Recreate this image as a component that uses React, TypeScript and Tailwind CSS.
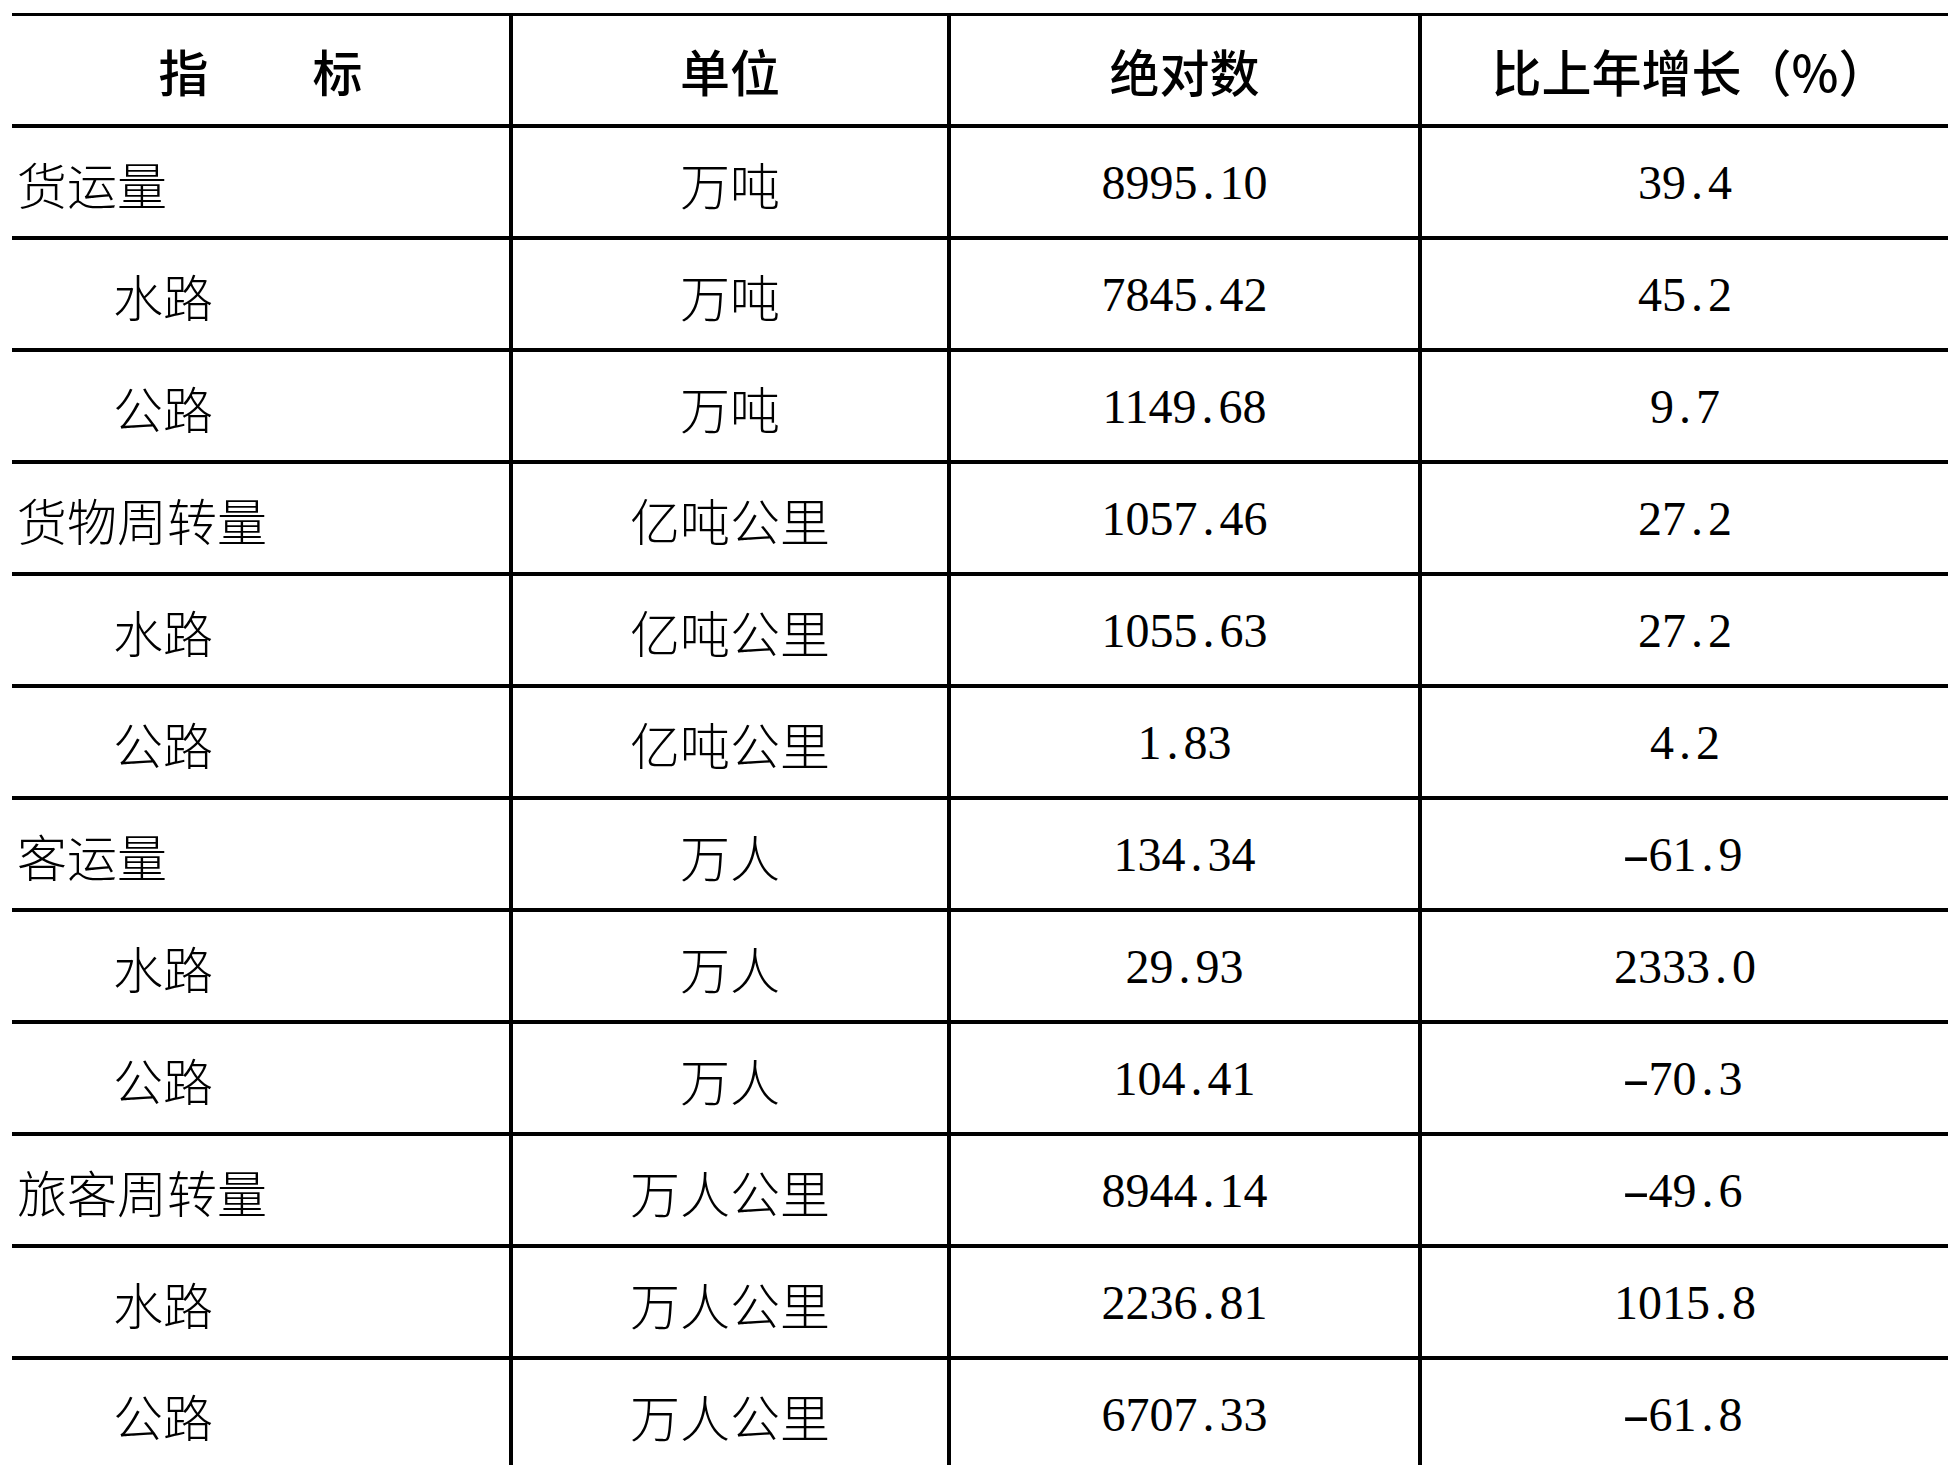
import React from "react";

type Row = { name: string; sub?: boolean; unit: string; value: string; growth: string };

const rows: Row[] = [
  { name: "货运量", unit: "万吨", value: "8995.10", growth: "39.4" },
  { name: "水路", sub: true, unit: "万吨", value: "7845.42", growth: "45.2" },
  { name: "公路", sub: true, unit: "万吨", value: "1149.68", growth: "9.7" },
  { name: "货物周转量", unit: "亿吨公里", value: "1057.46", growth: "27.2" },
  { name: "水路", sub: true, unit: "亿吨公里", value: "1055.63", growth: "27.2" },
  { name: "公路", sub: true, unit: "亿吨公里", value: "1.83", growth: "4.2" },
  { name: "客运量", unit: "万人", value: "134.34", growth: "-61.9" },
  { name: "水路", sub: true, unit: "万人", value: "29.93", growth: "2333.0" },
  { name: "公路", sub: true, unit: "万人", value: "104.41", growth: "-70.3" },
  { name: "旅客周转量", unit: "万人公里", value: "8944.14", growth: "-49.6" },
  { name: "水路", sub: true, unit: "万人公里", value: "2236.81", growth: "1015.8" },
  { name: "公路", sub: true, unit: "万人公里", value: "6707.33", growth: "-61.8" },
];

const cjk = "font-['Noto_Sans_CJK_SC',sans-serif]";
const num = "font-['Liberation_Serif',serif] text-[48px]";

// SimSun-like numbers: wide period and long minus
function Num({ v }: { v: string }) {
  const neg = v.startsWith("-");
  const body = neg ? v.slice(1) : v;
  const [a, b] = body.split(".");
  return (
    <span className={num}>
      {neg && <span className="inline-block scale-x-175 mr-[5px]">-</span>}
      {a}
      {b !== undefined && (
        <>
          <span className="inline-block w-[22px] text-center">.</span>
          {b}
        </>
      )}
    </span>
  );
}

export default function App() {
  return (
    <div className="h-[1465px] overflow-hidden bg-white pt-[13px] pl-[12px] text-black">
      <div className="w-[1936px] border-t-[3px] border-black">
        <div className={`flex h-[112px] border-b-4 border-black text-[50px] font-medium ${cjk}`}>
          <div className="w-[497px] flex items-center justify-center gap-[104px]">
            <span>指</span>
            <span>标</span>
          </div>
          <div className="w-[438px] border-l-4 border-black flex items-center justify-center">单位</div>
          <div className="w-[471px] border-l-4 border-black flex items-center justify-center">绝对数</div>
          <div className="w-[530px] border-l-4 border-black flex items-center justify-center pl-[10px]">
            比上年增长（%）
          </div>
        </div>
        {rows.map((r, i) => (
          <div key={i} className="flex h-[112px] border-b-4 border-black">
            <div
              className={`w-[497px] flex items-center pt-[2px] text-[50px] font-light ${cjk} ${
                r.sub ? "pl-[101px]" : "pl-[5px]"
              }`}
            >
              {r.name}
            </div>
            <div
              className={`w-[438px] border-l-4 border-black flex items-center justify-center pt-[2px] text-[50px] font-light ${cjk}`}
            >
              {r.unit}
            </div>
            <div className="w-[471px] border-l-4 border-black flex items-center justify-center pt-[2px]">
              <Num v={r.value} />
            </div>
            <div className="w-[530px] border-l-4 border-black flex items-center justify-center pt-[2px]">
              <Num v={r.growth} />
            </div>
          </div>
        ))}
      </div>
    </div>
  );
}
